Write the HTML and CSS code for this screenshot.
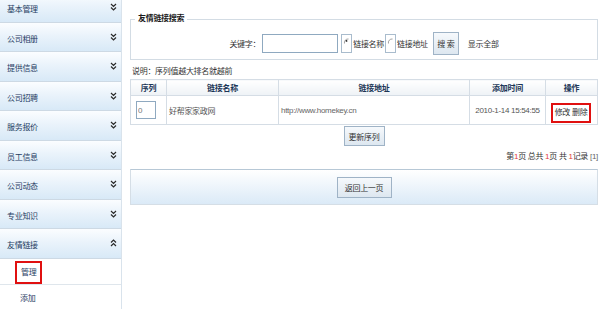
FILE: index.html
```html
<!DOCTYPE html>
<html lang="zh-CN">
<head>
<meta charset="utf-8">
<title>友情链接管理</title>
<link rel="stylesheet" href="styles.css">
</head>
<body>
<aside class="sidebar">
  <div class="menu-item"><span>基本管理</span><svg class="chev" viewBox="0 0 7 8"><path d="M1 1 L3.5 3.5 L6 1 M1 4.5 L3.5 7 L6 4.5"/></svg></div>
  <div class="menu-item"><span>公司相册</span><svg class="chev" viewBox="0 0 7 8"><path d="M1 1 L3.5 3.5 L6 1 M1 4.5 L3.5 7 L6 4.5"/></svg></div>
  <div class="menu-item"><span>提供信息</span><svg class="chev" viewBox="0 0 7 8"><path d="M1 1 L3.5 3.5 L6 1 M1 4.5 L3.5 7 L6 4.5"/></svg></div>
  <div class="menu-item"><span>公司招聘</span><svg class="chev" viewBox="0 0 7 8"><path d="M1 1 L3.5 3.5 L6 1 M1 4.5 L3.5 7 L6 4.5"/></svg></div>
  <div class="menu-item"><span>服务报价</span><svg class="chev" viewBox="0 0 7 8"><path d="M1 1 L3.5 3.5 L6 1 M1 4.5 L3.5 7 L6 4.5"/></svg></div>
  <div class="menu-item"><span>员工信息</span><svg class="chev" viewBox="0 0 7 8"><path d="M1 1 L3.5 3.5 L6 1 M1 4.5 L3.5 7 L6 4.5"/></svg></div>
  <div class="menu-item"><span>公司动态</span><svg class="chev" viewBox="0 0 7 8"><path d="M1 1 L3.5 3.5 L6 1 M1 4.5 L3.5 7 L6 4.5"/></svg></div>
  <div class="menu-item"><span>专业知识</span><svg class="chev" viewBox="0 0 7 8"><path d="M1 1 L3.5 3.5 L6 1 M1 4.5 L3.5 7 L6 4.5"/></svg></div>
  <div class="menu-item"><span>友情链接</span><svg class="chev" viewBox="0 0 7 8"><path d="M1 3.5 L3.5 1 L6 3.5 M1 7 L3.5 4.5 L6 7"/></svg></div>
  <div class="sub-item"><span class="hl">管理</span></div>
  <div class="sub-item"><span class="plain">添加</span></div>
</aside>
<main class="main">
  <fieldset class="search">
    <legend>友情链接搜索</legend>
    <div class="search-row">
      <span>关键字：</span>
      <input class="kw" type="text">
      <span class="radio checked"><svg viewBox="0 0 11 18"><path d="M8 3.5 A4.5 4.5 0 0 0 3 9"/><circle cx="5.5" cy="5.8" r="1.1"/></svg></span>
      <span>链接名称</span>
      <span class="radio"><svg viewBox="0 0 11 18"><path d="M8 3.5 A4.5 4.5 0 0 0 3 9"/></svg></span>
      <span>链接地址</span>
      <button class="btn btn-search">搜 索</button>
      <span class="showall">显示全部</span>
    </div>
  </fieldset>
  <p class="note">说明：序列值越大排名就越前</p>
  <table class="grid">
    <colgroup>
      <col class="c1"><col class="c2"><col class="c3"><col class="c4"><col class="c5">
    </colgroup>
    <thead>
      <tr><th>序列</th><th>链接名称</th><th>链接地址</th><th>添加时间</th><th>操作</th></tr>
    </thead>
    <tbody>
      <tr>
        <td><input class="order" type="text" value="0"></td>
        <td>好帮家家政网</td>
        <td class="url">http://www.homekey.cn</td>
        <td class="center">2010-1-14 15:54:55</td>
        <td class="center ops-cell"><span class="ops">修改 删除</span></td>
      </tr>
    </tbody>
  </table>
  <div class="center-row"><button class="btn btn-update">更新序列</button></div>
  <div class="pager">第<em>1</em>页 总共 <em>1</em>页 共 <em>1</em>记录 <span class="pg">[1]</span></div>
  <div class="footer-bar"><button class="btn btn-back">返回上一页</button></div>
</main>
</body>
</html>
```

FILE: styles.css
```css
* { box-sizing: border-box; }
html, body { margin: 0; padding: 0; }
body {
  width: 600px;
  height: 309px;
  overflow: hidden;
  display: flex;
  align-items: flex-start;
  background: #fff;
  font-family: "Liberation Sans", "Noto Sans CJK SC", sans-serif;
  font-size: 8px;
  letter-spacing: -0.3px;
  color: #444;
}

/* sidebar */
.sidebar {
  width: 122px;
  flex: none;
  margin-top: -7px;
  border-right: 1px solid #d9e3ec;
  height: 330px;
}
.menu-item {
  height: 29.5px;
  display: flex;
  align-items: center;
  justify-content: space-between;
  padding: 3px 4px 0 7px;
  background: linear-gradient(to bottom, #fbfdff 0%, #eaf3fb 45%, #d8e9f7 100%);
  border-bottom: 1px solid #cdd9e4;
  color: #1f3d63;
}
.chev {
  width: 7px;
  height: 8px;
  margin-top: -3px;
}
.chev path {
  fill: none;
  stroke: #2a2a2a;
  stroke-width: 1.2;
}
.sub-item {
  height: 26px;
  display: flex;
  align-items: center;
  padding-left: 15px;
  border-bottom: 1px solid #dfe6ec;
  color: #1f3d63;
}
.sub-item:first-of-type { }
.hl {
  margin-top: 3px;
  border: 2px solid #e01010;
  padding: 4px 4px;
  line-height: 11px;
}
.plain { padding-left: 5px; }

/* main */
.main {
  flex: 1;
  padding: 14px 3px 0 8px;
}
.search {
  margin: 0;
  padding: 8px 0 4px;
  border: 1px solid #d3dce4;
  min-width: 0;
}
.search legend {
  margin-left: 4px;
  padding: 0 3px;
  line-height: 10px;
  font-weight: bold;
  color: #1a1a1a;
}
.search-row {
  display: flex;
  align-items: center;
  justify-content: center;
  height: 23px;
  color: #333;
}
.kw {
  width: 76px;
  height: 19px;
  margin: 0 2px 0 2px;
  border: 1px solid #8fa9c0;
  padding: 0;
  font: inherit;
}
.radio {
  display: inline-flex;
  width: 11px;
  height: 19px;
  border: 1px solid #a9bccd;
  background: #fff;
  margin: 0 1px;
}
.radio svg { width: 9px; height: 17px; }
.radio path { fill: none; stroke: #8b8b8b; stroke-width: 1; }
.radio circle { fill: #222; }
.btn {
  font: inherit;
  letter-spacing: inherit;
  color: #333;
  background: linear-gradient(to bottom, #f6f9fc, #dde7f0);
  border: 1px solid #9fb3c6;
  padding: 0;
  cursor: pointer;
}
.btn-search { width: 26px; height: 23px; margin-left: 5px; }
.showall { margin-left: 9px; }

.note {
  margin: 7px 0 0 2px;
  line-height: 10px;
  color: #333;
}

.grid {
  width: 100%;
  margin-top: 2px;
  border-collapse: collapse;
  table-layout: fixed;
}
.c1 { width: 36px; }
.c2 { width: 112px; }
.c3 { width: 191px; }
.c4 { width: 76px; }
.c5 { width: 52px; }
.grid th, .grid td {
  border: 1px solid #d5dde5;
  padding: 0 2px;
}
.grid th {
  height: 16px;
  font-weight: bold;
  color: #1b3556;
  background: linear-gradient(to bottom, #ffffff, #eef2f6);
  text-align: center;
}
.grid td {
  height: 29px;
  color: #555;
}
.grid .url { color: #666; }
.grid .center { text-align: center; }
.grid .ops-cell {
  vertical-align: bottom;
  padding: 0 1px 1px 0;
}
.order {
  display: block;
  width: 20px;
  height: 18px;
  margin-left: 3px;
  border: 1px solid #8fa9c0;
  padding: 0 1px;
  font: inherit;
  color: #777;
}
.ops {
  display: inline-block;
  vertical-align: bottom;
  border: 2px solid #e01010;
  padding: 3px 2px;
  line-height: 10px;
  color: #333;
}

.center-row {
  display: flex;
  justify-content: center;
  margin-top: 1px;
}
.btn-update { width: 41px; height: 20px; }

.pager {
  margin-top: 6px;
  line-height: 10px;
  text-align: right;
  color: #333;
}
.pager em { font-style: normal; color: #e23b3b; }
.pager .pg { color: #666; }

.footer-bar {
  margin-top: 7px;
  height: 36px;
  display: flex;
  align-items: center;
  justify-content: center;
  border: 1px solid #d5dee6;
  border-top-color: #b7c8d6;
  background: linear-gradient(to bottom, #ffffff, #dbeaf7);
}
.btn-back { width: 55px; height: 21px; }
```
